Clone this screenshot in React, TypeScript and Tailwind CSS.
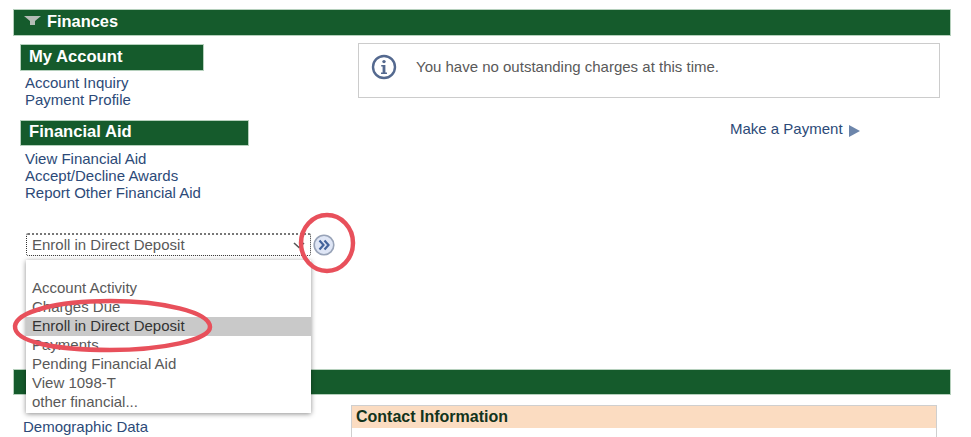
const linkClass = 'block text-[15px] leading-[17px] text-[#2c4a78]'

function SectionBar({ title, className }: { title: string; className: string }) {
  return (
    <div className={`${className} bg-[#155b2c] border border-[#b5d0bc] pl-[8px] text-[16.6px] font-bold text-white`}>
      {title}
    </div>
  )
}

function InfoIcon() {
  return (
    <svg width="26" height="26" viewBox="0 0 26 26" fill="none" className="shrink-0">
      <circle cx="13" cy="13" r="11" stroke="#54698f" strokeWidth="2.4" />
      <circle cx="13" cy="7.6" r="1.7" fill="#54698f" />
      <path d="M10.2 11h4.2v7.4h1.6v1.6h-6v-1.6h1.6v-5.8h-1.4z" fill="#54698f" />
    </svg>
  )
}

const options = ['Account Activity', 'Charges Due', 'Enroll in Direct Deposit', 'Payments', 'Pending Financial Aid', 'View 1098-T', 'other financial...']

export default function App() {
  return (
    <div className="relative w-[971px] h-[437px] overflow-hidden bg-white pt-[9px] pl-[13px] font-['Liberation_Sans',Arial,sans-serif]">
      <div className="w-[938px] h-[27px] bg-[#155b2c] border border-[#b5d0bc] flex items-center pl-[10px] pb-[4px] gap-[6px]">
        <svg width="17" height="9" viewBox="0 0 17 9">
          <path d="M0 0h17L11 5v4H6V5z" fill="#b4bdb6" />
        </svg>
        <span className="text-[16.4px] leading-[22px] font-bold text-white">Finances</span>
      </div>

      <div className="flex h-[333px]">
        <div className="w-[345px] pl-[7px] pt-[8px]">
          <SectionBar title="My Account" className="w-[184px] h-[27px] leading-[23px]" />
          <div className="pl-[5px] pt-[3px]">
            <a className={linkClass}>Account Inquiry</a>
            <a className={linkClass}>Payment Profile</a>
          </div>
          <div className="mt-[12px]">
            <SectionBar title="Financial Aid" className="w-[229px] h-[26px] leading-[22px]" />
          </div>
          <div className="pl-[5px] pt-[4px]">
            <a className={linkClass}>View Financial Aid</a>
            <a className={linkClass}>Accept/Decline Awards</a>
            <a className={linkClass}>Report Other Financial Aid</a>
          </div>
          <div className="flex items-center mt-[32px] ml-[6px]">
            <div className="w-[285px] h-[23px] bg-white border border-dotted border-[#333] border-t-[#777] border-t-2 rounded-[2px] flex items-center justify-between pl-[5px] pr-[5px] text-[15px] text-[#595959]">
              <span>Enroll in Direct Deposit</span>
              <svg width="12" height="7" viewBox="0 0 12 7" fill="none">
                <path d="M1 1l5 4.5L11 1" stroke="#555" strokeWidth="1.6" />
              </svg>
            </div>
            <svg width="22" height="22" viewBox="0 0 22 22" fill="none" className="ml-[2px]">
              <circle cx="11" cy="11" r="9.8" fill="#dfe6f6" stroke="#98a3b8" strokeWidth="1.6" />
              <path d="M6.5 6.5L10.5 11l-4 4.5M11.5 6.5l4 4.5-4 4.5" stroke="#42639c" strokeWidth="2.2" />
            </svg>
          </div>
        </div>

        <div className="pt-[7px]">
          <div className="w-[582px] h-[55px] border border-[#cccccc] flex items-start pl-[12px] pt-[10px] gap-[19px]">
            <InfoIcon />
            <span className="text-[15px] leading-[26px] text-[#595959]">You have no outstanding charges at this time.</span>
          </div>
          <div className="flex items-center mt-[22px] ml-[372px] gap-[6px]">
            <a className="text-[15px] leading-[17px] text-[#2c4a78]">Make a Payment</a>
            <svg width="11" height="12" viewBox="0 0 11 12" className="mt-[4px]">
              <path d="M0 0l11 6-11 6z" fill="#6d86ab" />
            </svg>
          </div>
        </div>
      </div>

      <div className="w-[938px] h-[26px] bg-[#155b2c] border border-[#b5d0bc]" />

      <div className="flex">
        <a className="w-[338px] pl-[10px] pt-[23px] text-[15px] leading-[17px] text-[#2c4a78]">Demographic Data</a>
        <div className="mt-[10px] w-[586px] h-[40px] border border-[#cfcfcf]">
          <div className="h-[22px] bg-[#fbdcc1] pl-[4px] text-[16px] leading-[22px] font-bold text-[#12331c]">Contact Information</div>
        </div>
      </div>

      {/* open select list */}
      <div className="absolute left-[26px] top-[260px] w-[285px] h-[153px] bg-white pt-[19px] shadow-[0_1px_5px_rgba(0,0,0,0.45)]">
        {options.map((option) => (
          <div
            key={option}
            className={`h-[19px] pl-[6px] text-[15px] leading-[17px] ${option === 'Enroll in Direct Deposit' ? 'bg-[#c9c9c9] text-[#333]' : 'text-[#595959]'}`}
          >
            {option}
          </div>
        ))}
      </div>

      {/* red marker annotations */}
      <svg className="absolute left-0 top-0 pointer-events-none" width="971" height="437" fill="none">
        <path d="M15 326C17 312 55 301 110 301C162 301 210 312 210 327C210 340 162 350 110 350C55 350 14 342 15 326Z" stroke="#e8505b" strokeWidth="4.5" />
        <ellipse cx="327" cy="243" rx="26" ry="28" stroke="#e8505b" strokeWidth="4.5" />
      </svg>
    </div>
  )
}
